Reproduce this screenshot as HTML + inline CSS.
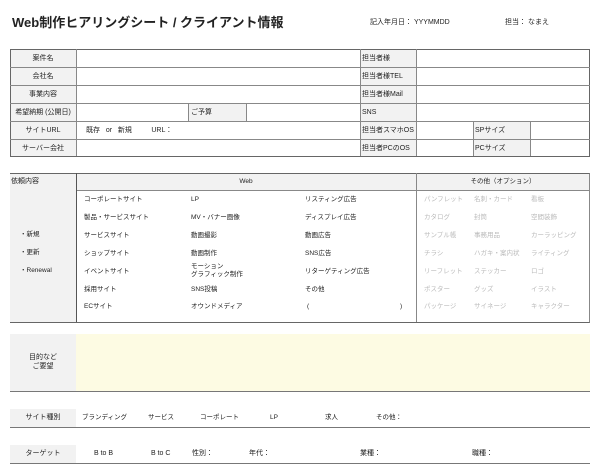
<!DOCTYPE html>
<html><head><meta charset="utf-8"><style>
*{margin:0;padding:0;box-sizing:border-box}
body{width:600px;height:470px;background:#fff;font-family:"Liberation Sans","Noto Sans CJK JP",sans-serif;color:#222;position:relative;overflow:hidden;font-size:7px}
.a{position:absolute;white-space:nowrap;line-height:9px}
.g{background:#f2f2f2}
.b{position:absolute;border:1px solid #666}
.v{position:absolute;width:1px;background:#888}
.h{position:absolute;height:1px;background:#888}
.c{text-align:center}
.lt{color:#bbb}
.i{font-size:6.5px}
</style></head><body>
<div class="a" style="left:12px;top:15px;font-size:13px;line-height:16px;font-weight:bold">Web制作ヒアリングシート / クライアント情報</div>
<div class="a" style="left:370px;top:18px">記入年月日：&nbsp;YYYMMDD</div>
<div class="a" style="left:505px;top:18px">担当：&nbsp;なまえ</div>

<!-- table 1 -->
<div class="a g" style="left:10px;top:49px;width:66px;height:107px"></div>
<div class="a g" style="left:188px;top:103px;width:58px;height:18px"></div>
<div class="a g" style="left:360px;top:49px;width:56px;height:107px"></div>
<div class="a g" style="left:473px;top:121px;width:57px;height:35px"></div>
<div class="b" style="left:10px;top:49px;width:580px;height:108px"></div>
<div class="h" style="left:10px;top:67px;width:580px"></div>
<div class="h" style="left:10px;top:85px;width:580px"></div>
<div class="h" style="left:10px;top:103px;width:580px"></div>
<div class="h" style="left:10px;top:121px;width:580px"></div>
<div class="h" style="left:10px;top:139px;width:580px"></div>
<div class="v" style="left:76px;top:49px;height:107px"></div>
<div class="v" style="left:188px;top:103px;height:18px"></div>
<div class="v" style="left:246px;top:103px;height:18px"></div>
<div class="v" style="left:360px;top:49px;height:107px"></div>
<div class="v" style="left:416px;top:49px;height:107px"></div>
<div class="v" style="left:473px;top:121px;height:35px"></div>
<div class="v" style="left:530px;top:121px;height:35px"></div>
<div class="a c" style="left:10px;width:66px;top:54px">案件名</div>
<div class="a c" style="left:10px;width:66px;top:72px">会社名</div>
<div class="a c" style="left:10px;width:66px;top:90px">事業内容</div>
<div class="a c" style="left:10px;width:66px;top:108px">希望納期 (公開日)</div>
<div class="a c" style="left:10px;width:66px;top:126px">サイトURL</div>
<div class="a c" style="left:10px;width:66px;top:144px">サーバー会社</div>
<div class="a" style="left:191px;top:108px">ご予算</div>
<div class="a" style="left:86px;top:126px">既存&nbsp;&nbsp;&nbsp;or&nbsp;&nbsp;&nbsp;新規&nbsp;&nbsp;&nbsp;&nbsp;&nbsp;&nbsp;&nbsp;&nbsp;&nbsp;&nbsp;URL：</div>
<div class="a" style="left:362px;top:54px">担当者様</div>
<div class="a" style="left:362px;top:72px">担当者様TEL</div>
<div class="a" style="left:362px;top:90px">担当者様Mail</div>
<div class="a" style="left:362px;top:108px">SNS</div>
<div class="a" style="left:362px;top:126px">担当者スマホOS</div>
<div class="a" style="left:362px;top:144px">担当者PCのOS</div>
<div class="a" style="left:475px;top:126px">SPサイズ</div>
<div class="a" style="left:475px;top:144px">PCサイズ</div>

<!-- table 2 -->
<div class="a g" style="left:10px;top:173px;width:66px;height:149px"></div>
<div class="a g" style="left:76px;top:173px;width:514px;height:17px"></div>
<div class="b" style="left:10px;top:173px;width:580px;height:150px;border-left:none;border-right-color:#888"></div>
<div class="h" style="left:76px;top:190px;width:514px"></div>
<div class="v" style="left:76px;top:173px;height:149px;background:#555"></div>
<div class="v" style="left:416px;top:173px;height:149px"></div>
<div class="a" style="left:11px;top:177px">依頼内容</div>
<div class="a c i" style="left:76px;width:340px;top:177px">Web</div>
<div class="a c i" style="left:416px;width:174px;top:177px">その他（オプション）</div>
<div class="a i" style="left:20px;top:230px">・新規</div>
<div class="a i" style="left:20px;top:248px">・更新</div>
<div class="a i" style="left:20px;top:266px">・Renewal</div>

<div class="a i" style="left:84px;top:195px">コーポレートサイト</div>
<div class="a i" style="left:84px;top:213px">製品・サービスサイト</div>
<div class="a i" style="left:84px;top:231px">サービスサイト</div>
<div class="a i" style="left:84px;top:249px">ショップサイト</div>
<div class="a i" style="left:84px;top:267px">イベントサイト</div>
<div class="a i" style="left:84px;top:285px">採用サイト</div>
<div class="a i" style="left:84px;top:302px">ECサイト</div>

<div class="a i" style="left:191px;top:195px">LP</div>
<div class="a i" style="left:191px;top:213px">MV・バナー画像</div>
<div class="a i" style="left:191px;top:231px">動画撮影</div>
<div class="a i" style="left:191px;top:249px">動画制作</div>
<div class="a i" style="left:191px;top:263px;line-height:8px">モーション<br>グラフィック制作</div>
<div class="a i" style="left:191px;top:285px">SNS投稿</div>
<div class="a i" style="left:191px;top:302px">オウンドメディア</div>

<div class="a i" style="left:305px;top:195px">リスティング広告</div>
<div class="a i" style="left:305px;top:213px">ディスプレイ広告</div>
<div class="a i" style="left:305px;top:231px">動画広告</div>
<div class="a i" style="left:305px;top:249px">SNS広告</div>
<div class="a i" style="left:305px;top:267px">リターゲティング広告</div>
<div class="a i" style="left:305px;top:285px">その他</div>
<div class="a i" style="left:307px;top:302px">(</div>
<div class="a i" style="left:400px;top:302px">)</div>

<div class="a i lt" style="left:424px;top:195px">パンフレット</div>
<div class="a i lt" style="left:424px;top:213px">カタログ</div>
<div class="a i lt" style="left:424px;top:231px">サンプル帳</div>
<div class="a i lt" style="left:424px;top:249px">チラシ</div>
<div class="a i lt" style="left:424px;top:267px">リーフレット</div>
<div class="a i lt" style="left:424px;top:285px">ポスター</div>
<div class="a i lt" style="left:424px;top:302px">パッケージ</div>

<div class="a i lt" style="left:474px;top:195px">名刺・カード</div>
<div class="a i lt" style="left:474px;top:213px">封筒</div>
<div class="a i lt" style="left:474px;top:231px">事務用品</div>
<div class="a i lt" style="left:474px;top:249px">ハガキ・案内状</div>
<div class="a i lt" style="left:474px;top:267px">ステッカー</div>
<div class="a i lt" style="left:474px;top:285px">グッズ</div>
<div class="a i lt" style="left:474px;top:302px">サイネージ</div>

<div class="a i lt" style="left:531px;top:195px">看板</div>
<div class="a i lt" style="left:531px;top:213px">空間装飾</div>
<div class="a i lt" style="left:531px;top:231px">カーラッピング</div>
<div class="a i lt" style="left:531px;top:249px">ライティング</div>
<div class="a i lt" style="left:531px;top:267px">ロゴ</div>
<div class="a i lt" style="left:531px;top:285px">イラスト</div>
<div class="a i lt" style="left:531px;top:302px">キャラクター</div>

<!-- purpose -->
<div class="a g" style="left:10px;top:334px;width:66px;height:57px"></div>
<div class="a" style="left:76px;top:334px;width:514px;height:57px;background:#fdfbe3"></div>
<div class="h" style="left:10px;top:391px;width:580px;background:#777"></div>
<div class="a c" style="left:10px;width:66px;top:353px">目的など<br>ご要望</div>

<!-- site type -->
<div class="a g" style="left:10px;top:409px;width:66px;height:18px"></div>
<div class="h" style="left:10px;top:427px;width:580px;background:#777"></div>
<div class="a c" style="left:10px;width:66px;top:413px">サイト種別</div>
<div class="a i" style="left:82px;top:413px">ブランディング</div>
<div class="a i" style="left:148px;top:413px">サービス</div>
<div class="a i" style="left:200px;top:413px">コーポレート</div>
<div class="a i" style="left:270px;top:413px">LP</div>
<div class="a i" style="left:325px;top:413px">求人</div>
<div class="a i" style="left:376px;top:413px">その他：</div>

<!-- target -->
<div class="a g" style="left:10px;top:445px;width:66px;height:18px"></div>
<div class="h" style="left:10px;top:463px;width:580px;background:#777"></div>
<div class="a c" style="left:10px;width:66px;top:449px">ターゲット</div>
<div class="a" style="left:94px;top:449px">B to B</div>
<div class="a" style="left:151px;top:449px">B to C</div>
<div class="a" style="left:192px;top:449px">性別：</div>
<div class="a" style="left:249px;top:449px">年代：</div>
<div class="a" style="left:360px;top:449px">業種：</div>
<div class="a" style="left:472px;top:449px">職種：</div>
</body></html>
